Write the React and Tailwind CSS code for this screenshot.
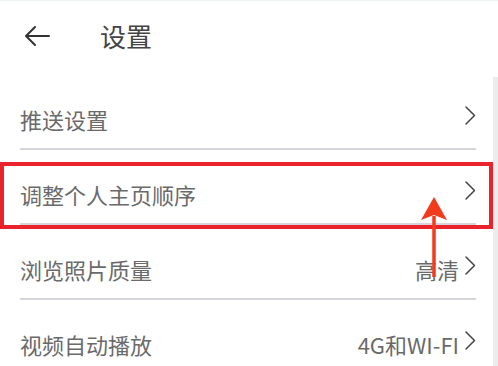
import React from 'react'

const rows = [
  { label: '推送设置', value: '' },
  { label: '调整个人主页顺序', value: '' },
  { label: '浏览照片质量', value: '高清' },
  { label: '视频自动播放', value: '4G和WI-FI' },
]

function Chevron() {
  return (
    <svg width="12" height="21" viewBox="0 0 12 21" className="mb-[6px]">
      <path d="M2 2 L10.5 10.5 L2 19" fill="none" stroke="#444" strokeWidth="1.5" strokeLinecap="round" strokeLinejoin="round" />
    </svg>
  )
}

export default function App() {
  return (
    <div className="relative w-[498px] h-[366px] overflow-hidden bg-white" style={{ fontFamily: '"Noto Sans CJK SC", "Noto Sans", sans-serif' }}>
      {/* header */}
      <div className="h-[75px] flex items-center border-t border-[#eef4f0] pb-[4px]">
        <svg width="28" height="24" viewBox="0 0 28 24" className="ml-[23px]">
          <path d="M26 12 H3 M12 3 L3 12 L12 21" fill="none" stroke="#333" strokeWidth="2" strokeLinecap="round" strokeLinejoin="round" />
        </svg>
        <span className="ml-[49px] text-[26px] leading-none text-[#444]">设置</span>
      </div>

      {/* list */}
      <div className="flex">
        <div className="ml-[20px] w-[456px] flex flex-col">
          {rows.map((r) => (
            <div key={r.label} className="h-[75px] flex items-end justify-between pb-[16px] border-b-2 border-[#d6d4dc]">
              <span className="text-[22px] leading-[26px] text-[#6a6a6a]">{r.label}</span>
              <div className="flex items-end gap-[5px]">
                {r.value && <span className="text-[22px] leading-[26px] text-[#6a6a6a]">{r.value}</span>}
                <Chevron />
              </div>
            </div>
          ))}
        </div>
        <div className="ml-auto w-[5px] h-[300px] bg-[#ececec] mt-[2px]"></div>
      </div>

      {/* highlight box */}
      <div className="absolute left-0 top-[162px] w-[493px] h-[67px] border-[4px] border-[#ea222c]"></div>

      {/* arrow */}
      <svg className="absolute left-[420px] top-[196px]" width="28" height="84" viewBox="0 0 28 84">
        <path d="M14 20 V81" stroke="#f23a1d" strokeWidth="3.5" />
        <path d="M14 1 L27 24 L14 19 L1 24 Z" fill="#f23a1d" />
      </svg>
    </div>
  )
}
